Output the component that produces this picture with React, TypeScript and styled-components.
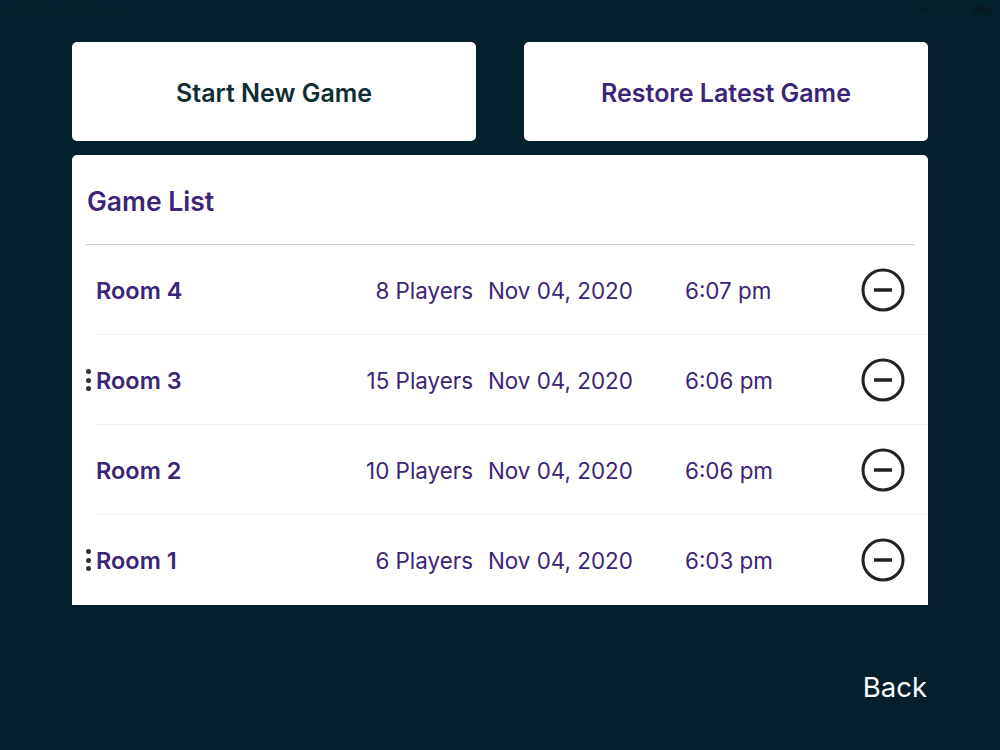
import styled, { createGlobalStyle } from "styled-components";

const GlobalStyle = createGlobalStyle`
  html, body {
    margin: 0;
    padding: 0;
    background: #03202c;
  }
  body {
    font-family: "Inter", "Liberation Sans", sans-serif;
  }
`;

const Screen = styled.div`
  width: 1000px;
  height: 750px;
  background: #03202c;
  display: flex;
  flex-direction: column;
  overflow: hidden;
`;

const StatusBar = styled.div`
  height: 19px;
  padding: 0 9px 0 7px;
  display: flex;
  align-items: center;
  justify-content: space-between;
  font-family: "Liberation Sans", sans-serif;
  font-size: 12px;
  color: #0a1a22;
`;

const StatusGroup = styled.div<{ $gap: number }>`
  display: flex;
  align-items: center;
  gap: ${(p) => p.$gap}px;
`;

const Battery = styled.div`
  width: 19px;
  height: 8px;
  background: #0a1a22;
  border-radius: 1px;
`;

const Content = styled.main`
  margin: 23px 72px 0;
  display: flex;
  flex-direction: column;
`;

const TopActions = styled.div`
  display: grid;
  grid-template-columns: 404px 404px;
  justify-content: space-between;
  margin-bottom: 14px;
`;

const ActionButton = styled.button<{ $tone: string }>`
  height: 99px;
  padding: 2px 0 0;
  border: none;
  border-radius: 5px;
  background: #fff;
  color: ${(p) => p.$tone};
  font-family: inherit;
  font-size: 25px;
  font-weight: 600;
`;

const Panel = styled.section`
  background: #fff;
  border-radius: 5px 5px 0 0;
  height: 450px;
  display: flex;
  flex-direction: column;
`;

const PanelHeader = styled.div`
  height: 90px;
  margin: 0 14px;
  box-sizing: border-box;
  padding: 29px 0 0 1px;
  border-bottom: 1px solid #c9c9cc;
`;

const PanelTitle = styled.h2`
  margin: 0;
  font-size: 26.5px;
  line-height: 34px;
  font-weight: 600;
  color: #3c2577;
`;

const Row = styled.div<{ $last?: boolean }>`
  position: relative;
  height: 90px;
  box-sizing: border-box;
  margin-left: 24px;
  display: grid;
  grid-template-columns: 180px 197px 212px 176px 44px;
  align-items: center;
  border-bottom: 1px solid ${(p) => (p.$last ? "transparent" : "#eeeef0")};
  color: #3c2577;
`;

const RoomName = styled.div`
  padding-top: 2px;
  font-size: 23.5px;
  font-weight: 600;
`;

const Cell = styled.div`
  padding-top: 2px;
  font-size: 22.4px;
  white-space: nowrap;
`;

const Players = styled(Cell)`
  text-align: right;
`;

const DateCell = styled(Cell)`
  padding-left: 15px;
`;

const DragHandle = styled.div`
  position: absolute;
  left: -10px;
  top: 34px;
  display: flex;
  flex-direction: column;
  gap: 3.5px;
`;

const Dot = styled.span`
  width: 5px;
  height: 5px;
  border-radius: 50%;
  background: #33333a;
`;

const RemoveButton = styled.button`
  width: 44px;
  height: 44px;
  padding: 0;
  border: none;
  background: none;
  display: block;
`;

const Footer = styled.div`
  display: flex;
  justify-content: flex-end;
  margin: 63px 73px 0 0;
`;

const BackLink = styled.a`
  color: #fff;
  font-size: 27.5px;
  line-height: 38px;
`;

const rooms = [
  { name: "Room 4", players: "8 Players", date: "Nov 04, 2020", time: "6:07 pm", handle: false },
  { name: "Room 3", players: "15 Players", date: "Nov 04, 2020", time: "6:06 pm", handle: true },
  { name: "Room 2", players: "10 Players", date: "Nov 04, 2020", time: "6:06 pm", handle: false },
  { name: "Room 1", players: "6 Players", date: "Nov 04, 2020", time: "6:03 pm", handle: true },
];

const MinusIcon = () => (
  <svg width="44" height="44" viewBox="0 0 44 44" fill="none">
    <circle cx="22" cy="22" r="20" stroke="#222226" strokeWidth="3" />
    <path d="M13 22H31" stroke="#222226" strokeWidth="3.5" />
  </svg>
);

const App = () => {
  return (
    <Screen>
      <GlobalStyle />
      <StatusBar>
        <StatusGroup $gap={10}>
          <span>6:07 PM</span>
          <span>Wed Nov 4</span>
        </StatusGroup>
        <StatusGroup $gap={5}>
          <svg width="14" height="11" viewBox="0 0 13 10" fill="none" stroke="#0a1a22" strokeWidth="1.5">
            <path d="M1 3.5C4.5 .5 8.5 .5 12 3.5" />
            <path d="M3 5.7C5 4 8 4 10 5.7" />
            <path d="M5 7.8C5.8 7.1 7.2 7.1 8 7.8" />
          </svg>
          <span>100%</span>
          <Battery />
        </StatusGroup>
      </StatusBar>
      <Content>
        <TopActions>
          <ActionButton $tone="#0f2d33">Start New Game</ActionButton>
          <ActionButton $tone="#3c2577">Restore Latest Game</ActionButton>
        </TopActions>
        <Panel>
          <PanelHeader>
            <PanelTitle>Game List</PanelTitle>
          </PanelHeader>
          {rooms.map((room, i) => (
            <Row key={room.name} $last={i === rooms.length - 1}>
              {room.handle && (
                <DragHandle>
                  <Dot />
                  <Dot />
                  <Dot />
                </DragHandle>
              )}
              <RoomName>{room.name}</RoomName>
              <Players>{room.players}</Players>
              <DateCell>{room.date}</DateCell>
              <Cell>{room.time}</Cell>
              <RemoveButton>
                <MinusIcon />
              </RemoveButton>
            </Row>
          ))}
        </Panel>
      </Content>
      <Footer>
        <BackLink>Back</BackLink>
      </Footer>
    </Screen>
  );
};

export default App;
